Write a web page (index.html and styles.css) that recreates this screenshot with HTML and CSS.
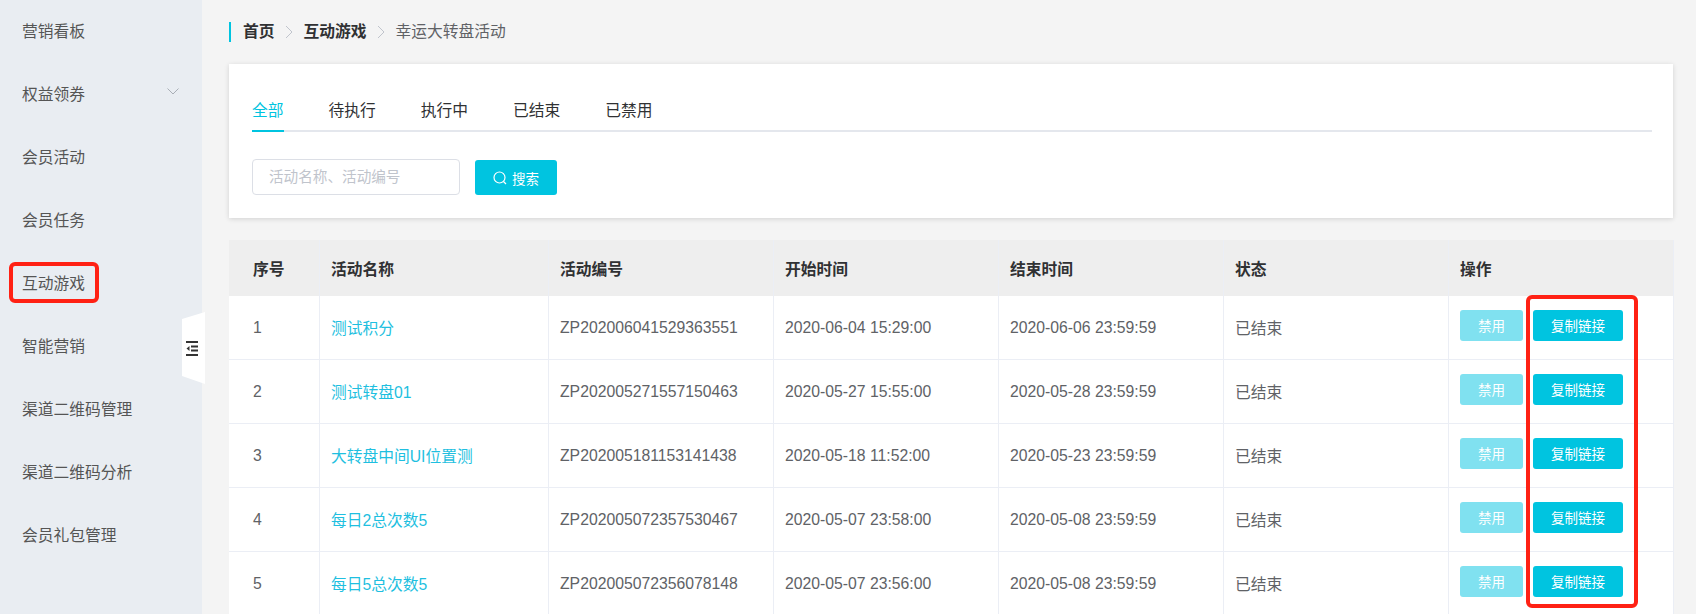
FILE: index.html
```html
<!DOCTYPE html>
<html lang="zh-CN">
<head>
<meta charset="utf-8">
<title>幸运大转盘活动</title>
<link rel="stylesheet" href="styles.css">
</head>
<body>
<div class="app">
  <aside class="sidebar">
    <div class="nav-item">营销看板</div>
    <div class="nav-item nav-item-sub">权益领券
      <svg class="nav-chevron" width="12" height="7" viewBox="0 0 12 7"><path d="M.5.5 6 6 11.5.5" fill="none" stroke="#a9aeb6" stroke-width="1"/></svg>
    </div>
    <div class="nav-item">会员活动</div>
    <div class="nav-item">会员任务</div>
    <div class="nav-item">互动游戏</div>
    <div class="nav-item">智能营销</div>
    <div class="nav-item">渠道二维码管理</div>
    <div class="nav-item">渠道二维码分析</div>
    <div class="nav-item">会员礼包管理</div>
    <div class="red-nav"></div>
    <div class="collapse-handle">
      <svg width="12" height="15" viewBox="0 0 12 15"><path d="M0 1h12M0 14h12M5 5.500h7M5 9.500h7" stroke="#333" stroke-width="2" fill="none"/><path d="M3.500 5 0.500 7.500 3.500 10z" fill="#333"/></svg>
    </div>
  </aside>
  <main class="main">
    <nav class="crumbs">
      <span class="crumb-strong">首页</span>
      <svg class="crumb-sep" width="8" height="14" viewBox="0 0 8 14"><path d="M1 1l6 6-6 6" fill="none" stroke="#c0c4cc" stroke-width="1"/></svg>
      <span class="crumb-strong">互动游戏</span>
      <svg class="crumb-sep" width="8" height="14" viewBox="0 0 8 14"><path d="M1 1l6 6-6 6" fill="none" stroke="#c0c4cc" stroke-width="1"/></svg>
      <span class="crumb-current">幸运大转盘活动</span>
    </nav>
    <section class="card">
      <div class="tabs">
        <span class="tab tab-active">全部</span>
        <span class="tab">待执行</span>
        <span class="tab">执行中</span>
        <span class="tab">已结束</span>
        <span class="tab">已禁用</span>
      </div>
      <div class="search-row">
        <input class="search-input" type="text" placeholder="活动名称、活动编号">
        <button class="search-btn" type="button">
          <svg width="14" height="14" viewBox="0 0 14 14"><circle cx="6.500" cy="6.500" r="5.500" fill="none" stroke="#fff" stroke-width="1.200"/><path d="M10.500 10.500 13 13" stroke="#fff" stroke-width="1.200"/></svg>
          搜索
        </button>
      </div>
    </section>
    <table class="grid">
      <colgroup>
        <col class="c-index"><col class="c-name"><col class="c-std"><col class="c-std"><col class="c-std"><col class="c-std"><col class="c-ops">
      </colgroup>
      <thead>
        <tr><th class="first">序号</th><th>活动名称</th><th>活动编号</th><th>开始时间</th><th>结束时间</th><th>状态</th><th>操作</th></tr>
      </thead>
      <tbody>
        <tr><td class="first">1</td><td><a class="link">测试积分</a></td><td>ZP202006041529363551</td><td>2020-06-04 15:29:00</td><td>2020-06-06 23:59:59</td><td>已结束</td><td><div class="ops"><button class="btn btn-off" type="button">禁用</button><button class="btn btn-copy" type="button">复制链接</button></div></td></tr>
        <tr><td class="first">2</td><td><a class="link">测试转盘01</a></td><td>ZP202005271557150463</td><td>2020-05-27 15:55:00</td><td>2020-05-28 23:59:59</td><td>已结束</td><td><div class="ops"><button class="btn btn-off" type="button">禁用</button><button class="btn btn-copy" type="button">复制链接</button></div></td></tr>
        <tr><td class="first">3</td><td><a class="link">大转盘中间UI位置测</a></td><td>ZP202005181153141438</td><td>2020-05-18 11:52:00</td><td>2020-05-23 23:59:59</td><td>已结束</td><td><div class="ops"><button class="btn btn-off" type="button">禁用</button><button class="btn btn-copy" type="button">复制链接</button></div></td></tr>
        <tr><td class="first">4</td><td><a class="link">每日2总次数5</a></td><td>ZP202005072357530467</td><td>2020-05-07 23:58:00</td><td>2020-05-08 23:59:59</td><td>已结束</td><td><div class="ops"><button class="btn btn-off" type="button">禁用</button><button class="btn btn-copy" type="button">复制链接</button></div></td></tr>
        <tr><td class="first">5</td><td><a class="link">每日5总次数5</a></td><td>ZP202005072356078148</td><td>2020-05-07 23:56:00</td><td>2020-05-08 23:59:59</td><td>已结束</td><td><div class="ops"><button class="btn btn-off" type="button">禁用</button><button class="btn btn-copy" type="button">复制链接</button></div></td></tr>
      </tbody>
    </table>
    <div class="red-ops"></div>
  </main>
</div>
</body>
</html>
```

FILE: styles.css
```css
* { box-sizing: border-box; }
html, body { margin: 0; height: 614px; overflow: hidden; }
body {
  background: #f4f4f4;
  font-family: "Liberation Sans", "Noto Sans CJK SC", sans-serif;
  font-size: 15.750px;
  color: #606266;
}
.app { display: flex; height: 614px; }

.sidebar {
  position: relative;
  flex: 0 0 202px;
  background: #e9edf2;
}
.nav-item {
  position: relative;
  height: 63px;
  line-height: 63px;
  padding-left: 22px;
  color: #555;
}
.nav-chevron { position: absolute; left: 167px; top: 25px; }
.red-nav {
  position: absolute;
  left: 9px;
  top: 262px;
  width: 90px;
  height: 41px;
  border: 4px solid #ff2114;
  border-radius: 6px;
}
.collapse-handle {
  position: absolute;
  left: 182px;
  top: 312px;
  width: 23px;
  height: 72px;
  background: #fff;
  clip-path: polygon(0 7px, 100% 0, 100% 100%, 0 64px);
  display: flex;
  align-items: center;
  justify-content: center;
  padding: 0 5px 0 1px;
}

.main { position: relative; flex: 1; min-width: 0; padding: 22px 23px 0 27px; }

.crumbs {
  display: flex;
  align-items: center;
  height: 20px;
  padding-left: 12px;
  border-left: 2px solid #00c4e0;
  line-height: 18px;
}
.crumb-strong { color: #303133; font-weight: 700; }
.crumb-sep { margin: 0 10.500px; }
.crumb-current { color: #606266; }

.card {
  margin-top: 22px;
  height: 154px;
  padding: 24px 21px 0 23px;
  background: #fff;
  box-shadow: 0 1px 5px rgba(0, 0, 0, .14);
}
.tabs {
  display: flex;
  gap: 45px;
  height: 44px;
  border-bottom: 2px solid #e4e7ed;
}
.tab { height: 44px; line-height: 45px; color: #303133; }
.tab-active { color: #00c4e0; border-bottom: 2px solid #00c4e0; }

.search-row { display: flex; gap: 15px; margin-top: 27px; }
.search-input {
  width: 208px;
  height: 36px;
  padding: 0 16px;
  border: 1px solid #dcdfe6;
  border-radius: 4px;
  font: 14.625px "Liberation Sans", "Noto Sans CJK SC", sans-serif;
  background: #fff;
}
.search-input::placeholder { color: #c0c4cc; opacity: 1; }
.search-btn {
  display: flex;
  align-items: center;
  justify-content: center;
  gap: 5px;
  width: 82px;
  height: 35px;
  margin-top: 1px;
  padding: 0;
  border: 0;
  border-radius: 3px;
  background: #00c4e0;
  color: #fff;
  font: 13.500px "Liberation Sans", "Noto Sans CJK SC", sans-serif;
}

.grid {
  margin-top: 22px;
  width: 1444px;
  table-layout: fixed;
  border-collapse: separate;
  border-spacing: 0;
  background: #fff;
  border-right: 1px solid #ebeef5;
}
.c-index { width: 91px; }
.c-name { width: 229px; }
.c-std { width: 225px; }
.c-ops { width: 224px; }
.grid th {
  height: 56px;
  padding: 0 12px 0 11px;
  background: #eee;
  color: #303133;
  font-weight: 700;
  text-align: left;
  border-right: 1px solid #ebeef5;
}
.grid td {
  height: 64px;
  padding: 0 12px 0 11px;
  border-right: 1px solid #ebeef5;
  border-bottom: 1px solid #ebeef5;
  color: #606266;
}
.grid th:last-child, .grid td:last-child { border-right: 0; padding-left: 11px; }
.grid .first { padding-left: 24px; }
.link { color: #1fbfe0; }

.ops { display: flex; gap: 10px; margin-bottom: 5px; }
.btn {
  height: 31px;
  padding: 0;
  border: 0;
  border-radius: 3px;
  color: #fff;
  font: 13.500px "Liberation Sans", "Noto Sans CJK SC", sans-serif;
}
.btn-off { width: 63px; background: #80e1f0; }
.btn-copy { width: 90px; background: #00c4e0; }

.red-ops {
  position: absolute;
  left: 1324px;
  top: 295px;
  width: 112px;
  height: 313px;
  border: 4px solid #ff2114;
  border-radius: 6px;
}
```
